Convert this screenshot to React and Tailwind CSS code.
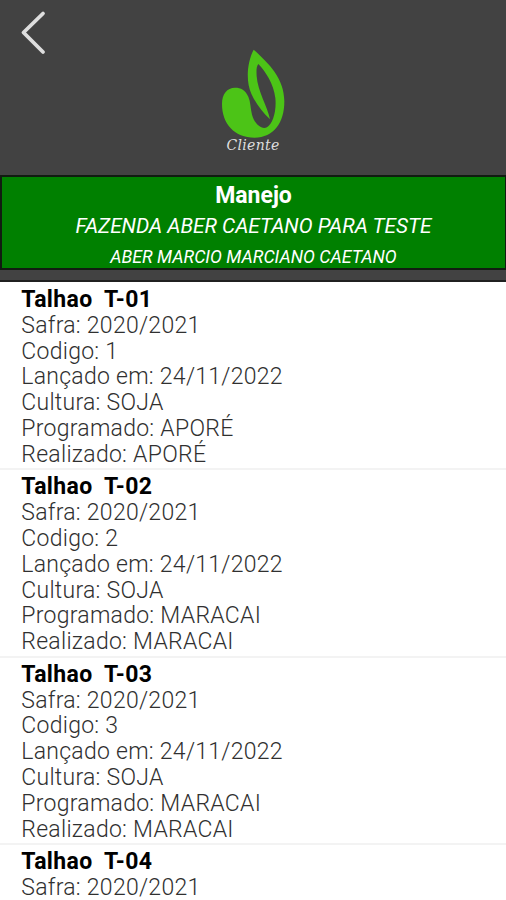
const talhoes = [
    { id: 1, nome: "T-01", safra: "2020/2021", data: "24/11/2022", cultura: "SOJA", variedade: "APORÉ" },
    { id: 2, nome: "T-02", safra: "2020/2021", data: "24/11/2022", cultura: "SOJA", variedade: "MARACAI" },
    { id: 3, nome: "T-03", safra: "2020/2021", data: "24/11/2022", cultura: "SOJA", variedade: "MARACAI" },
    { id: 4, nome: "T-04", safra: "2020/2021" },
];

const Logo = () => (
    <div className="flex flex-col items-center">
        <svg width="64" height="90" viewBox="64 28 192 270" aria-hidden="true">
            <path
                fill="#4cc417"
                fillRule="evenodd"
                d="M162 30 C142 68 138 125 155 162 C168 191 188 217 211 239 C202 198 174 155 171 110 C170 92 170 80 176 73 C198 96 222 133 227 175 C231 214 220 252 202 263 C184 271 164 251 157 225 C152 204 153 187 146 171 C137 151 124 144 106 144 C82 144 67 163 67 193 C67 253 105 294 165 294 C222 294 254 250 254 185 C254 116 208 72 162 30 Z"
            />
        </svg>
        <span className="-mt-[3px] font-['DejaVu_Serif','Noto_Serif',serif] text-[14px] leading-[18px] tracking-[0.3px] italic text-[#dedede]">
            Cliente
        </span>
    </div>
);

const Talhao = ({ item }) => (
    <li className="h-[187.4px] shrink-0 border-b-2 border-[#f3f3f3] px-[21.3px] pt-[4.1px] text-[23px] leading-[25.8px] font-light tracking-[0.27px] text-[#303030]">
        <h2 className="font-bold tracking-[0.35px] whitespace-pre text-black">{`Talhao  ${item.nome}`}</h2>
        <p>Safra: {item.safra}</p>
        {item.data && (
            <>
                <p>Codigo: {item.id}</p>
                <p>Lançado em: {item.data}</p>
                <p>Cultura: {item.cultura}</p>
                <p>Programado: {item.variedade}</p>
                <p>Realizado: {item.variedade}</p>
            </>
        )}
    </li>
);

const App = () => {
    return (
        <div className="relative flex h-[900px] w-full flex-col overflow-hidden bg-white font-[Roboto,sans-serif]">
            <header className="flex h-[282px] shrink-0 flex-col border-b-2 border-[#202020] bg-[#424242]">
                <button className="absolute top-[10px] left-[20px]" aria-label="Voltar">
                    <svg width="26" height="46" viewBox="0 0 26 46" fill="none">
                        <path
                            d="M23 3.5 L3.5 22.5 L23 42"
                            stroke="#dedede"
                            strokeWidth="3.8"
                            strokeLinecap="round"
                            strokeLinejoin="round"
                        />
                    </svg>
                </button>
                <div className="h-[175px] shrink-0 pt-[49px]">
                    <Logo />
                </div>
                <div className="flex h-[95px] shrink-0 flex-col items-center border-2 border-r border-[#111c11] bg-[#008000] pt-[4px] text-white">
                    <h1 className="text-[23px] leading-[29px] font-bold">Manejo</h1>
                    <p className="text-[20.8px] leading-[32px] italic">FAZENDA ABER CAETANO PARA TESTE</p>
                    <p className="text-[17.8px] leading-[29px] italic">ABER MARCIO MARCIANO CAETANO</p>
                </div>
            </header>

            <ul className="flex flex-col pt-[0.9px]">
                {talhoes.map((item) => (
                    <Talhao key={item.id} item={item} />
                ))}
            </ul>
        </div>
    );
};

export default App;
